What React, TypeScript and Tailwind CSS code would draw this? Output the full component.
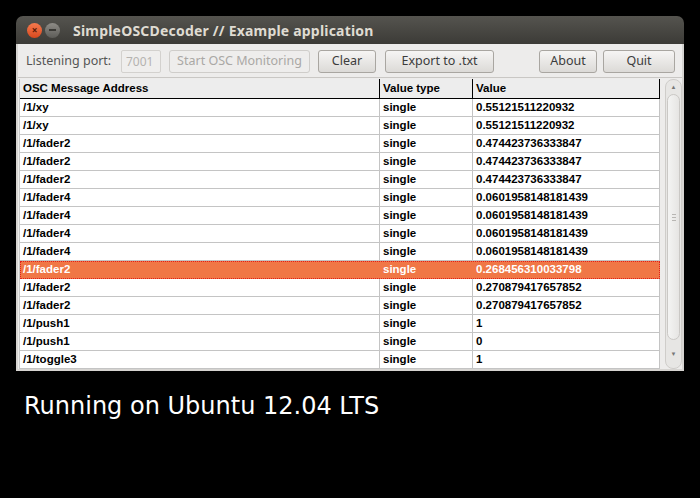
const rows: [string, string, string][] = [
  ["/1/xy", "single", "0.55121511220932"],
  ["/1/xy", "single", "0.55121511220932"],
  ["/1/fader2", "single", "0.474423736333847"],
  ["/1/fader2", "single", "0.474423736333847"],
  ["/1/fader2", "single", "0.474423736333847"],
  ["/1/fader4", "single", "0.0601958148181439"],
  ["/1/fader4", "single", "0.0601958148181439"],
  ["/1/fader4", "single", "0.0601958148181439"],
  ["/1/fader4", "single", "0.0601958148181439"],
  ["/1/fader2", "single", "0.268456310033798"],
  ["/1/fader2", "single", "0.270879417657852"],
  ["/1/fader2", "single", "0.270879417657852"],
  ["/1/push1", "single", "1"],
  ["/1/push1", "single", "0"],
  ["/1/toggle3", "single", "1"],
];

const SELECTED = 9;

function Btn({ label, w, disabled }: { label: string; w: string; disabled?: boolean }) {
  return (
    <div
      className={`${w} shrink-0 h-[23px] rounded-[3px] border flex items-center justify-center whitespace-nowrap text-[12.5px] ${
        disabled
          ? "border-[#cfcdca] bg-[#eeedec] text-[#aaa8a5]"
          : "border-[#a9a6a1] bg-gradient-to-b from-[#f6f5f4] to-[#dcdad7] text-[#3c3c3c]"
      }`}
    >
      {label}
    </div>
  );
}

export default function App() {
  return (
    <div className="w-[700px] h-[498px] bg-black pt-[16px] pl-[16px] overflow-hidden" style={{ fontFamily: "'Noto Sans', sans-serif" }}>
      <div className="w-[668px]">
        <div className="h-[28px] rounded-t-[7px] bg-gradient-to-b from-[#55544f] to-[#3c3b37] flex items-center pl-[11px]">
          <div className="w-[15px] h-[15px] rounded-full bg-gradient-to-b from-[#f5794d] to-[#d8481c] flex items-center justify-center text-[10px] leading-none text-[#5a1a06] font-bold">
            ×
          </div>
          <div className="ml-[3px] w-[15px] h-[15px] rounded-full bg-gradient-to-b from-[#8e8c87] to-[#5d5c58] flex items-center justify-center">
            <div className="w-[7px] h-[2px] bg-[#3a3935]" />
          </div>
          <div className="ml-[13px] text-[14px] font-bold text-[#dfdbd2] tracking-[0.2px]">SimpleOSCDecoder // Example application</div>
        </div>
        <div className="bg-[#edeceb] border-x-[2px] border-b-[2px] border-[#d6d4d1]">
          <div className="h-[34px] pt-[2px] flex items-center pl-[8px] border-b border-[#c9c7c4]">
            <span className="w-[95px] shrink-0 whitespace-nowrap text-[12.5px] text-[#555]">Listening port:</span>
            <div className="w-[40px] shrink-0 h-[23px] border border-[#d3d1ce] rounded-[2px] bg-[#efeeed] text-[12px] text-[#b5b3b0] flex items-center pl-[4px]">
              7001
            </div>
            <div className="ml-[8px]">
              <Btn label="Start OSC Monitoring" w="w-[141px]" disabled />
            </div>
            <div className="ml-[8px]">
              <Btn label="Clear" w="w-[58px]" />
            </div>
            <div className="ml-[9px]">
              <Btn label="Export to .txt" w="w-[109px]" />
            </div>
            <div className="ml-[45px]">
              <Btn label="About" w="w-[58px]" />
            </div>
            <div className="ml-[6px]">
              <Btn label="Quit" w="w-[72px]" />
            </div>
          </div>
          <div className="flex pl-[1px] pt-[1px]" style={{ fontFamily: "'Liberation Sans', Arial, sans-serif" }}>
            <div className="w-[641px] bg-white border-l border-[#c8c8c8]">
              <div className="flex h-[20px] bg-[#ededed] border-b border-black text-[11.5px] font-bold text-black">
                <div className="w-[360px] pl-[3px] flex items-center border-r border-black">OSC Message Address</div>
                <div className="w-[93px] pl-[3px] flex items-center border-r border-black">Value type</div>
                <div className="flex-1 pl-[3px] flex items-center border-r border-black">Value</div>
              </div>
              {rows.map((r, i) => {
                const sel = i === SELECTED;
                return (
                  <div
                    key={i}
                    className={`flex h-[18px] text-[11.5px] font-bold border-b ${
                      sel ? "bg-[#f07746] text-white border-[#f07746] outline outline-1 outline-dotted outline-[#e0201a] -outline-offset-1" : "text-black border-[#c4c4c4]"
                    }`}
                  >
                    <div className={`w-[360px] pl-[3px] flex items-center border-r ${sel ? "border-transparent" : "border-[#c4c4c4]"}`}>{r[0]}</div>
                    <div className={`w-[93px] pl-[3px] flex items-center border-r ${sel ? "border-transparent" : "border-[#c4c4c4]"}`}>{r[1]}</div>
                    <div className={`flex-1 pl-[3px] flex items-center border-r ${sel ? "border-transparent" : "border-[#c4c4c4]"}`}>{r[2]}</div>
                  </div>
                );
              })}
            </div>
            <div className="ml-[5px] w-[17px] h-[290px] rounded-[8px] border border-[#cfcdca] bg-[#e7e6e4] flex flex-col items-center">
              <div className="h-[14px] flex items-center text-[6px] text-[#777]">▲</div>
              <div className="w-[13px] h-[246px] rounded-[7px] border border-[#cac8c5] bg-gradient-to-r from-[#f4f4f3] to-[#e6e5e3] flex items-center justify-center">
                <div className="flex flex-col gap-[2px]">
                  <div className="w-[4px] h-px bg-[#b8b6b3]" />
                  <div className="w-[4px] h-px bg-[#b8b6b3]" />
                  <div className="w-[4px] h-px bg-[#b8b6b3]" />
                </div>
              </div>
              <div className="flex-1 flex items-center text-[6px] text-[#777]">▼</div>
            </div>
          </div>
        </div>
      </div>
      <div className="mt-[17px] ml-[8px] text-[24px] text-white" style={{ fontFamily: "'DejaVu Sans', Verdana, sans-serif" }}>
        Running on Ubuntu 12.04 LTS
      </div>
    </div>
  );
}
